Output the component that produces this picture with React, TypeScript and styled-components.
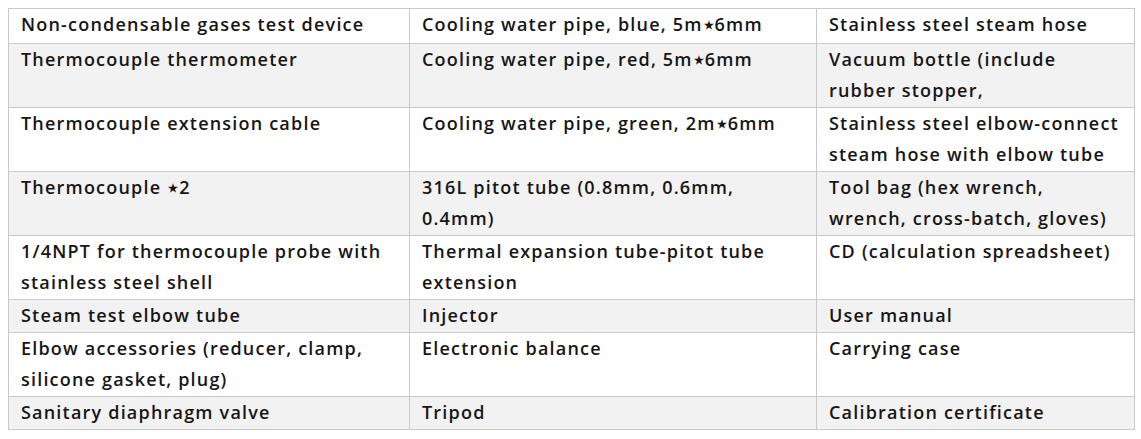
import styled, { createGlobalStyle } from "styled-components";

const GlobalStyle = createGlobalStyle`
  body {
    margin: 0;
    background: #ffffff;
    font-family: "Open Sans", "Liberation Sans", sans-serif;
    color: #161616;
  }
`;

const Page = styled.div`
  padding: 8px 0 0 8px;
`;

const Table = styled.table`
  border-collapse: collapse;
  width: 1126px;
  table-layout: fixed;
  border: 1px solid #c9c9c9;
`;

const Col = styled.col<{ $w: number }>`
  width: ${(p) => p.$w}px;
`;

const Row = styled.tr<{ $shade: boolean }>`
  background: ${(p) => (p.$shade ? "#f2f2f2" : "#ffffff")};
`;

const Cell = styled.td<{ $lines: number }>`
  border: 1px solid #c9c9c9;
  vertical-align: top;
  padding: 0 13px 1px 12px;
  height: ${(p) => p.$lines * 31 + 1}px;
  box-sizing: border-box;
  font-size: 18px;
  font-weight: 600;
  line-height: 31px;
  letter-spacing: 1.2px;
`;

const Star = styled.span`
  font-size: 11px;
  letter-spacing: 0;
  position: relative;
  top: -2px;
  margin: 0 1px;
`;

const X = () => <Star>{"\u2605"}</Star>;

type RowData = { cells: React.ReactNode[]; lines: number };

const rows: RowData[] = [
  { cells: ["Non-condensable gases test device", <>Cooling water pipe, blue, 5m<X />6mm</>, "Stainless steel steam hose"], lines: 1 },
  { cells: ["Thermocouple thermometer", <>Cooling water pipe, red, 5m<X />6mm</>, "Vacuum bottle (include rubber stopper,"], lines: 2 },
  { cells: ["Thermocouple extension cable", <>Cooling water pipe, green, 2m<X />6mm</>, "Stainless steel elbow-connect steam hose with elbow tube"], lines: 2 },
  { cells: [<>Thermocouple <X />2</>, "316L pitot tube (0.8mm, 0.6mm, 0.4mm)", "Tool bag (hex wrench, wrench, cross-batch, gloves)"], lines: 2 },
  { cells: ["1/4NPT for thermocouple probe with stainless steel shell", "Thermal expansion tube-pitot tube extension", "CD (calculation spreadsheet)"], lines: 2 },
  { cells: ["Steam test elbow tube", "Injector", "User manual"], lines: 1 },
  { cells: ["Elbow accessories (reducer, clamp, silicone gasket, plug)", "Electronic balance", "Carrying case"], lines: 2 },
  { cells: ["Sanitary diaphragm valve", "Tripod", "Calibration certificate"], lines: 1 },
];

export default function App() {
  return (
    <>
      <GlobalStyle />
      <Page>
        <Table>
          <colgroup>
            <Col $w={401} />
            <Col $w={407} />
            <Col $w={318} />
          </colgroup>
          <tbody>
            {rows.map((r, i) => (
              <Row key={i} $shade={i % 2 === 1}>
                {r.cells.map((c, j) => (
                  <Cell key={j} $lines={r.lines}>
                    {c}
                  </Cell>
                ))}
              </Row>
            ))}
          </tbody>
        </Table>
      </Page>
    </>
  );
}
